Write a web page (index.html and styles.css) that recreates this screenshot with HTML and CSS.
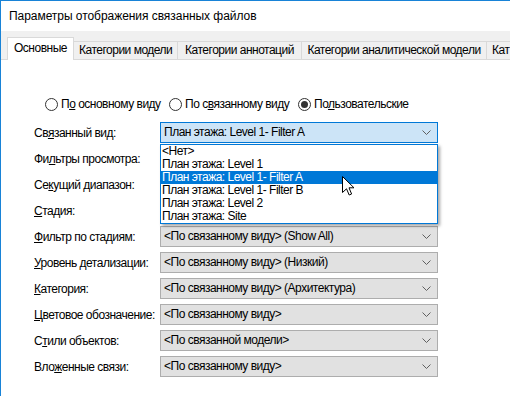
FILE: index.html
```html
<!DOCTYPE html>
<html lang="ru">
  <head>
    <meta charset="UTF-8" />
    <meta name="viewport" content="width=device-width, initial-scale=1.0" />
    <title>Параметры отображения связанных файлов</title>
    <link rel="stylesheet" href="styles.css">
  </head>
  <body>
    <div class="window">
      <header class="titlebar">Параметры отображения связанных файлов</header>

      <div class="dialog">
        <nav class="tabs">
          <div class="tab active">Основные</div>
          <div class="tab tab-model">Категории модели</div>
          <div class="tab tab-annot">Категории аннотаций</div>
          <div class="tab tab-analytic">Категории аналитической модели</div>
          <div class="tab tab-last">Кат</div>
        </nav>

        <main class="panel">
          <div class="radios">
            <label class="radio radio-main"><span class="dot"></span><span>П<u>о</u> основному виду</span></label>
            <label class="radio radio-linked"><span class="dot"></span><span>По с<u>в</u>язанному виду</span></label>
            <label class="radio"><span class="dot checked"></span><span>По<u>л</u>ьзовательские</span></label>
          </div>

          <div class="form">
            <span class="label">Св<u>я</u>занный вид:</span>
            <div class="combo-wrap">
              <div class="combo open">План этажа: Level 1- Filter A<svg class="chevron" width="9" height="5" viewBox="0 0 9 5"><polyline points="0.5,0.5 4.5,4.5 8.5,0.5" /></svg></div>
              <ul class="listbox">
                <li>&lt;Нет&gt;</li>
                <li>План этажа: Level 1</li>
                <li class="selected">План этажа: Level 1- Filter A</li>
                <li>План этажа: Level 1- Filter B</li>
                <li>План этажа: Level 2</li>
                <li>План этажа: Site</li>
              </ul>
              <svg class="cursor" width="13" height="20" viewBox="0 0 13 20">
                <path d="M0.5,0.5 L0.5,16.5 L4.5,12.8 L7.2,19 L9.6,18 L7,11.8 L12,11.8 Z" />
              </svg>
            </div>

            <span class="label">Фи<u>л</u>ьтры просмотра:</span>
            <div class="combo">&nbsp;</div>

            <span class="label">Се<u>к</u>ущий диапазон:</span>
            <div class="combo">&nbsp;</div>

            <span class="label"><u>С</u>тадия:</span>
            <div class="combo">&nbsp;</div>

            <span class="label"><u>Ф</u>ильтр по стадиям:</span>
            <div class="combo">&lt;По связанному виду&gt; (Show All)<svg class="chevron" width="9" height="5" viewBox="0 0 9 5"><polyline points="0.5,0.5 4.5,4.5 8.5,0.5" /></svg></div>

            <span class="label"><u>У</u>ровень детализации:</span>
            <div class="combo">&lt;По связанному виду&gt; (Низкий)<svg class="chevron" width="9" height="5" viewBox="0 0 9 5"><polyline points="0.5,0.5 4.5,4.5 8.5,0.5" /></svg></div>

            <span class="label"><u>К</u>атегория:</span>
            <div class="combo">&lt;По связанному виду&gt; (Архитектура)<svg class="chevron" width="9" height="5" viewBox="0 0 9 5"><polyline points="0.5,0.5 4.5,4.5 8.5,0.5" /></svg></div>

            <span class="label"><u>Ц</u>ветовое обозначение:</span>
            <div class="combo">&lt;По связанному виду&gt;<svg class="chevron" width="9" height="5" viewBox="0 0 9 5"><polyline points="0.5,0.5 4.5,4.5 8.5,0.5" /></svg></div>

            <span class="label">С<u>т</u>или объектов:</span>
            <div class="combo">&lt;По связанной модели&gt;<svg class="chevron" width="9" height="5" viewBox="0 0 9 5"><polyline points="0.5,0.5 4.5,4.5 8.5,0.5" /></svg></div>

            <span class="label">Вло<u>ж</u>енные связи:</span>
            <div class="combo">&lt;По связанному виду&gt;<svg class="chevron" width="9" height="5" viewBox="0 0 9 5"><polyline points="0.5,0.5 4.5,4.5 8.5,0.5" /></svg></div>
          </div>
        </main>
      </div>
    </div>
  </body>
</html>
```
FILE: styles.css
```css
html {
  font-family: "Liberation Sans", Arial, sans-serif;
  font-size: 12px;
  letter-spacing: -0.5px;
}

body {
  margin: 0;
  padding: 0;
  background: #f0f0f0;
  color: #000;
}

.window {
  height: 395px;
  overflow: hidden;
  border-top: 1px solid #1883d7;
  border-left: 1px solid #1883d7;
  background: #f0f0f0;
}

.titlebar {
  height: 30px;
  line-height: 30px;
  padding-left: 8px;
  font-size: 12px;
  letter-spacing: -0.05px;
  background: #fff;
  white-space: nowrap;
}

/* tab strip */
.tabs {
  display: flex;
  align-items: flex-end;
  height: 22px;
  margin: 6px 0 0 6px;
  white-space: nowrap;
}

.tab {
  box-sizing: border-box;
  height: 18px;
  line-height: 17px;
  padding: 0 5px;
  text-align: center;
  overflow: hidden;
  border-top: 1px solid #d9d9d9;
  border-right: 1px solid #d9d9d9;
  background: #f0f0f0;
  flex: none;
}

.tab.active {
  position: relative;
  z-index: 1;
  width: 67px;
  height: 23px;
  line-height: 21px;
  margin-bottom: -1px;
  border-left: 1px solid #d9d9d9;
  background: #fff;
}

.tab-model {
  width: 104px;
}

.tab-annot {
  width: 124px;
}

.tab-analytic {
  width: 185px;
}

.tab-last {
  flex: 1;
  text-align: left;
  border-right: none;
}

.panel {
  display: block;
  height: 340px;
  padding: 36px 0 0 33px;
  border-top: 1px solid #d9d9d9;
  background: #fff;
}

/* radio row */
.radios {
  display: flex;
  align-items: center;
  height: 16px;
  padding-left: 11px;
}

.radio {
  display: flex;
  align-items: center;
  gap: 3px;
  white-space: nowrap;
}

.radio-main {
  width: 124px;
}

.radio-linked {
  width: 129px;
}

.dot {
  box-sizing: border-box;
  width: 13px;
  height: 13px;
  border: 1px solid #333;
  border-radius: 50%;
  background: #fff;
  display: flex;
  align-items: center;
  justify-content: center;
}

.dot.checked::after {
  content: "";
  width: 7px;
  height: 7px;
  border-radius: 50%;
  background: #333;
}

/* label / combo grid */
.form {
  display: grid;
  grid-template-columns: 126px 278px;
  grid-auto-rows: 21px;
  row-gap: 5px;
  margin-top: 10px;
  align-items: center;
}

.label {
  white-space: nowrap;
}

.combo-wrap {
  position: relative;
  height: 21px;
}

.combo {
  position: relative;
  box-sizing: border-box;
  height: 21px;
  line-height: 19px;
  padding-left: 3px;
  border: 1px solid #adadad;
  background: #e1e1e1;
  white-space: nowrap;
}

.combo.open {
  border-color: #0078d7;
  background: #cce4f7;
}

.chevron {
  position: absolute;
  right: 6px;
  top: 7px;
  fill: none;
  stroke: #606060;
  stroke-width: 1;
}

/* open dropdown */
.listbox {
  position: absolute;
  z-index: 2;
  top: 22px;
  left: 0;
  box-sizing: border-box;
  width: 278px;
  margin: 0;
  padding: 0;
  list-style: none;
  border: 1px solid #0078d7;
  background: #fff;
  box-shadow: 2px 2px 3px rgba(0, 0, 0, 0.35);
}

.listbox li {
  height: 13px;
  line-height: 13px;
  padding-left: 1px;
  white-space: nowrap;
}

.listbox li.selected {
  background: #0078d7;
  color: #fff;
}

.cursor {
  position: absolute;
  z-index: 3;
  left: 182px;
  top: 54px;
  fill: #fff;
  stroke: #000;
  stroke-width: 1;
  stroke-linejoin: miter;
}
```
